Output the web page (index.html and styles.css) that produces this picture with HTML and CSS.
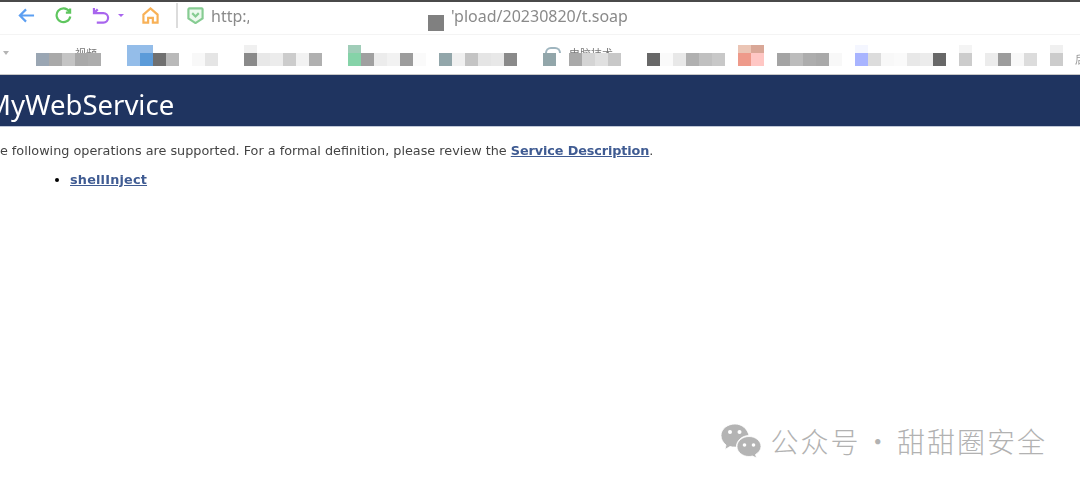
FILE: index.html
```html
<!DOCTYPE html>
<html lang="zh-CN">
<head>
  <meta charset="UTF-8">
  <title>MyWebService</title>
  <link rel="stylesheet" href="styles.css">
</head>
<body>
  <!-- Browser toolbar -->
  <div class="toolbar">
    <svg class="icon back" viewBox="0 0 18 18"><path d="M17 9H2M8.500 2.500 2 9l6.500 6.500"/></svg>
    <svg class="icon reload" viewBox="0 0 18 18"><path d="M15 4.500A7.300 7.300 0 1 0 16.200 10M16 1.500V6H11.500"/></svg>
    <svg class="icon undo" viewBox="0 0 20 18"><path d="M2 1V6.500H12A5 5 0 0 1 12 16.500H5M2 6.500 6 2.500"/></svg>
    <span class="caret"></span>
    <svg class="icon home" viewBox="0 0 18 18"><path d="M1.500 8 9 1.500 16.500 8V16.500H11.500V11.500H6.500V16.500H1.500Z"/></svg>
    <span class="divider"></span>
    <svg class="icon shield" viewBox="0 0 18 18"><path d="M1.500 2.500Q1.500 1.500 2.500 1.500H15.500Q16.500 1.500 16.500 2.500V12L9 17 1.500 12Z"/><path d="M5.500 6.500 9 10 12.500 6.500"/></svg>
    <span class="url url-start">http:,</span>
    <span class="url-mask"></span>
    <span class="url url-end">'pload/20230820/t.soap</span>
  </div>

  <!-- Bookmarks bar, blurred out into mosaic tiles -->
  <div class="bookmarks">
    <span class="more"></span>
    <div class="tiles">
      <div class="tile-row top">
        <i class="w3"></i><i class="w2 clip">视频</i><i class="w2"></i><i class="w2 c-blue2"></i><i class="w7"></i><i class="c-f0"></i><i class="w7"></i><i class="c-green2"></i>
        <i class="w14"></i><i class="globe"></i><i class="w5 clip">电脑技术</i><i class="w8"></i><i class="c-red1"></i><i class="c-red2"></i><i class="w7"></i><i class="c-blue3"></i><i class="w7"></i><i class="c-f4"></i><i class="w6"></i><i class="c-f0"></i>
      </div>
      <div class="tile-row">
        <i class="c-slate"></i><i class="c-a9"></i><i class="c-c4"></i><i class="c-a9"></i><i class="c-ad"></i><i class="w2"></i>
        <i class="c-blue2"></i><i class="c-blue1"></i><i class="c-70"></i><i class="c-b9"></i><i></i>
        <i class="c-f8"></i><i class="c-e5"></i><i class="w2"></i>
        <i class="c-8a"></i><i class="c-e8"></i><i class="c-ec"></i><i class="c-cc"></i><i class="c-f2"></i><i class="c-b0"></i><i class="w2"></i>
        <i class="c-green1"></i><i class="c-a0"></i><i class="c-ec"></i><i class="c-f2"></i><i class="c-9c"></i><i class="c-fa"></i><i></i>
        <i class="c-teal"></i><i class="c-f0"></i><i class="c-c4"></i><i class="c-e5"></i><i class="c-e8"></i><i class="c-8a"></i><i class="w2"></i>
        <i class="c-teal"></i><i class="w1"></i><i class="c-a9"></i><i class="c-d4"></i><i class="c-e0"></i><i class="c-c8"></i><i class="w2"></i>
        <i class="c-68"></i><i class="c-fa"></i><i class="c-e8"></i><i class="c-b0"></i><i class="c-c0"></i><i class="c-c8"></i><i></i>
        <i class="c-red3"></i><i class="c-red4"></i><i></i>
        <i class="c-a4"></i><i class="c-bc"></i><i class="c-ad"></i><i class="c-a9"></i><i class="c-f8"></i><i></i>
        <i class="c-blue3b"></i><i class="c-dc"></i><i class="c-f8"></i><i class="c-fa"></i><i class="c-e8"></i><i class="c-ec"></i><i class="c-68"></i><i></i>
        <i class="c-cc"></i><i></i><i class="c-ec"></i><i class="c-9c"></i><i class="c-f8"></i><i class="c-dc"></i><i></i>
        <i class="c-cc"></i><i class="last">后</i>
      </div>
    </div>
  </div>

  <!-- Service page -->
  <div class="heading">MyWebService</div>
  <div class="content">
    <p class="intro">The following operations are supported. For a formal definition, please review the <a href="#">Service Description</a>.</p>
    <ul class="ops">
      <li><a href="#">shellInject</a></li>
    </ul>
  </div>

  <!-- WeChat watermark -->
  <div class="watermark">
    <svg class="wechat" viewBox="0 0 40 34">
      <path class="bubble" d="M14 0C6.500 0 0 5 0 11.500c0 4 2 7 5 9.500l-1 4.500 5-3c1.500.4 3 .6 5 .6h1.500C15 17 21 11.500 28 11.500 26.500 5 21 0 14 0Z"/>
      <path class="bubble" d="M28 12.500c-6.500 0-12 4.500-12 10S21.500 32.500 28 32.500c1.200 0 2.400-.2 3.500-.5L35.500 34l-1-3.500c3.200-2 5.500-4.500 5.500-8C40 17 34.500 12.500 28 12.500Z"/>
      <circle class="eye" cx="9" cy="8" r="2"/><circle class="eye" cx="18.500" cy="8" r="2"/>
      <circle class="eye" cx="23.500" cy="21" r="1.800"/><circle class="eye" cx="32.500" cy="21" r="1.800"/>
    </svg>
    <span class="wm-text">公众号 · 甜甜圈安全</span>
  </div>
</body>
</html>
```

FILE: styles.css
```css
html, body {
  margin: 0;
  height: 100%;
  overflow: hidden;
  background: #fff;
}
body {
  position: relative;
  font-family: "DejaVu Sans", Verdana, sans-serif;
  border-top: 2px solid #4a4a4a;
  box-sizing: border-box;
}

/* toolbar */
.toolbar {
  display: flex;
  align-items: center;
  height: 26px;
  padding: 0 0 6px 18px;
  border-bottom: 1px solid #f4f4f4;
  filter: blur(0.4px);
}
.icon {
  fill: none;
  stroke-width: 2.300;
  width: 17px;
  height: 17px;
  flex: none;
}
.back { stroke: #5c9ff2; }
.reload { stroke: #5fc65f; margin-left: 20px; }
.undo { stroke: #a865ee; margin-left: 20px; width: 19px; }
.caret {
  width: 0;
  height: 0;
  margin: 0 18px 0 7px;
  border: 3px solid transparent;
  border-top: 3px solid #a865ee;
  border-bottom: 0;
}
.home { stroke: #f8b157; }
.divider {
  width: 2px;
  height: 25px;
  margin: 0 9px 0 17px;
  background: #dcdcdc;
}
.shield { stroke: #86cc92; }
.shield path:first-child { fill: #ecf9ee; }
.url {
  padding-top: 2px;
  font-family: "Noto Sans", sans-serif;
  font-size: 16px;
  color: #8a8a8a;
  flex: none;
}
.url-start {
  margin-left: 7px;
  width: 38px;
  overflow: hidden;
}
.url-mask {
  width: 16px;
  height: 16px;
  margin: 16px 7px 0 179px;
  background: #808080;
}

/* bookmarks */
.bookmarks {
  display: flex;
  height: 40px;
  padding-left: 3px;
  border-bottom: 1px solid #c8c8c8;
  box-sizing: border-box;
}
.more {
  width: 0;
  height: 0;
  margin: 16px 27px 0 0;
  border: 3px solid transparent;
  border-top: 4px solid #b4b4b4;
  border-bottom: 0;
}
.tiles {
  padding-top: 10px;
  filter: blur(0.4px);
}
.tile-row {
  display: flex;
  height: 13px;
}
.tile-row.top {
  height: 8px;
}
.tile-row i {
  display: block;
  width: 13px;
  flex: none;
  font-style: normal;
}
.tile-row i.w1 { width: 13px; }
.tile-row i.w2 { width: 26px; }
.tile-row i.w3 { width: 39px; }
.tile-row i.w5 { width: 65px; }
.tile-row i.w6 { width: 78px; }
.tile-row i.w7 { width: 91px; }
.tile-row i.w8 { width: 104px; }
.tile-row i.w14 { width: 182px; }

/* text that shows only above the mosaic */
.tile-row i.clip {
  height: 6px;
  margin-top: 2px;
  overflow: hidden;
  font-family: "Noto Sans CJK SC", sans-serif;
  font-size: 11px;
  line-height: 12px;
  color: #777;
  white-space: nowrap;
}
.tile-row i.globe {
  width: 16px;
  height: 6px;
  margin: 2px 8px 0 2px;
  border: 2px solid #9fb5bf;
  border-bottom: 0;
  border-radius: 8px 8px 0 0;
  box-sizing: border-box;
}
.tile-row i.last {
  margin-left: 12px;
  overflow: hidden;
  font-family: "Noto Sans CJK SC", sans-serif;
  font-size: 11px;
  line-height: 13px;
  color: #999;
}
.c-slate { background: #9aa6b3; }
.c-blue1 { background: #5b9bd9; }
.c-blue2 { background: #94bde9; }
.c-blue3 { background: #f4f6ff; }
.c-blue3b { background: #a8b4ff; }
.c-green1 { background: #85d3a8; }
.c-green2 { background: #a0cdb8; }
.c-teal { background: #92a6aa; }
.c-red1 { background: #ebc5b5; }
.c-red2 { background: #d9a797; }
.c-red3 { background: #ee9a8a; }
.c-red4 { background: #ffc7c4; }
.c-68 { background: #686868; }
.c-70 { background: #707070; }
.c-8a { background: #8a8a8a; }
.c-9c { background: #9c9c9c; }
.c-a0 { background: #a0a0a0; }
.c-a4 { background: #a4a4a4; }
.c-a9 { background: #a9a9a9; }
.c-ad { background: #adadad; }
.c-b0 { background: #b0b0b0; }
.c-b9 { background: #b9b9b9; }
.c-bc { background: #bcbcbc; }
.c-c0 { background: #c0c0c0; }
.c-c4 { background: #c4c4c4; }
.c-c8 { background: #c8c8c8; }
.c-cc { background: #cccccc; }
.c-d4 { background: #d4d4d4; }
.c-dc { background: #dcdcdc; }
.c-e0 { background: #e0e0e0; }
.c-e5 { background: #e5e5e5; }
.c-e8 { background: #e8e8e8; }
.c-ec { background: #ececec; }
.c-f0 { background: #f0f0f0; }
.c-f2 { background: #f2f2f2; }
.c-f4 { background: #f4f4f4; }
.c-f8 { background: #f8f8f8; }
.c-fa { background: #fafafa; }

/* page */
.heading {
  height: 51px;
  line-height: 60px;
  margin-left: -23px;
  padding-left: 9px;
  background: #1f3460;
  border-bottom: 1px solid #c0c8d8;
  color: #fff;
  font-family: "Noto Sans", sans-serif;
  font-size: 27.500px;
  overflow: hidden;
  filter: blur(0.4px);
}
.content {
  margin-left: -16px;
  font-size: 12.800px;
  color: #444;
  filter: blur(0.35px);
}
.content a {
  color: #3f5b92;
  font-weight: bold;
  text-decoration: underline;
}
.intro {
  margin: 16px 0 0;
  line-height: 16px;
}
.intro a {
  letter-spacing: -0.1px;
}
.ops {
  margin: 13px 0 0;
  padding-left: 86px;
  line-height: 16px;
  color: #000;
}
.ops a {
  letter-spacing: 0.2px;
}

/* watermark */
.watermark {
  position: absolute;
  right: 33px;
  bottom: 25px;
  display: flex;
  align-items: center;
  gap: 10px;
}
.wechat {
  width: 40px;
  height: 34px;
}
.bubble { fill: #b4b4b4; stroke: #fff; stroke-width: 0.8; }
.eye { fill: #fff; }
.wm-text {
  font-family: "Noto Sans CJK SC", sans-serif;
  font-size: 28px;
  font-weight: 300;
  letter-spacing: 2px;
  word-spacing: -5px;
  color: #b2b2b2;
  white-space: nowrap;
}
```
